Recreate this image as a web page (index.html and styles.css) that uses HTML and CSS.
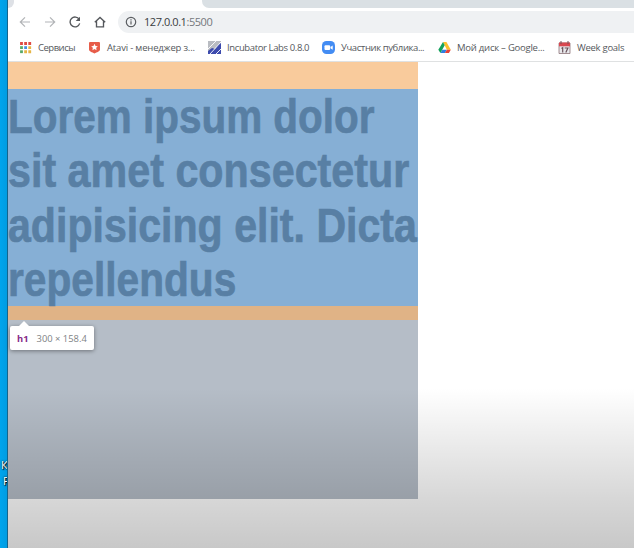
FILE: index.html
```
<!DOCTYPE html>
<html lang="ru">
<head>
<meta charset="utf-8">
<title>127.0.0.1:5500</title>
<link rel="stylesheet" href="styles.css">
</head>
<body>
<div class="desktop">
  <aside class="wallpaper"><div class="shortcut"><span>К</span><span>Р</span></div></aside>
  <main class="browser">
    <div class="tabs"><div class="tab-left"></div><div class="tab-active"></div><div class="tab-rest"></div></div>
    <nav class="toolbar">
      <svg class="nav muted" viewBox="0 0 12 12"><path d="M11 6H1.5M6 1.3 1.3 6 6 10.7"/></svg>
      <svg class="nav muted" viewBox="0 0 12 12"><path d="M1 6h9.5M6 1.3 10.7 6 6 10.7"/></svg>
      <svg class="nav" viewBox="0 0 12 12"><path d="M10.2 3.4A4.9 4.9 0 1 0 10.7 7.4"/><path class="solid" d="M11 .7V5H6.7z"/></svg>
      <svg class="nav" viewBox="0 0 12 12"><path d="M.8 6.3 6 1.4l5.2 4.9M2.5 5.2v5.6h7V5.2"/></svg>
      <div class="address">
        <svg class="info" viewBox="0 0 12 12"><circle cx="6" cy="6" r="4.7"/><path d="M6 5.3v3.2M6 3.2v1.2"/></svg>
        <span class="url">127.0.0.1<i>:5500</i></span>
      </div>
    </nav>
    <nav class="bookmarks">
      <a class="mark services"><svg viewBox="0 0 12 12"><path fill="#df4b44" d="M1 1h2.6v2.6H1zM4.8 1h2.6v2.6H4.8zM8.6 1h2.6v2.6H8.6z"/><path fill="#58a968" d="M1 4.8h2.6v2.6H1z"/><path fill="#458ee4" d="M4.8 4.8h2.6v2.6H4.8z"/><path fill="#e6b545" d="M8.6 4.8h2.6v2.6H8.6zM4.8 8.6h2.6v2.6H4.8zM8.6 8.6h2.6v2.6H8.6z"/><path fill="#58a968" d="M1 8.6h2.6v2.6H1z"/></svg><span>Сервисы</span></a>
      <a class="mark atavi"><svg viewBox="0 0 12 14"><path fill="#e75c49" d="M.8 1h10.4l.7 1v7.5c0 1.6-3.4 2.7-5.9 4-2.5-1.3-5.9-2.4-5.9-4V2z"/><path fill="#fff" d="m6 3 1.1 2.3 2.5.3-1.8 1.8.4 2.5L6 8.7 3.8 9.9l.4-2.5-1.8-1.8 2.5-.3z"/></svg><span>Atavi - менеджер з...</span></a>
      <a class="mark labs"><svg viewBox="0 0 13 13"><path fill="#b9bcc2" d="M0 0h13v13H0z"/><path fill="#3d4bad" d="M13 2v11H0v-3l4-3 3 1 3-4z"/><path fill="none" stroke="#fff" stroke-width=".9" d="M0 8 8 0M2 13 13 1M8 13l5-5"/></svg><span>Incubator Labs 0.8.0</span></a>
      <a class="mark zoom"><svg viewBox="0 0 13 13"><rect width="13" height="13" rx="4.5" fill="#438cf3"/><rect x="2.5" y="4.2" width="5.6" height="4.8" rx="1" fill="#fff"/><path fill="#fff" d="m8.5 6 2.2-1.5v4.2L8.5 7.3z"/></svg><span>Участник публика...</span></a>
      <a class="mark drive"><svg viewBox="0 0 12 12"><path fill="#fbc02d" d="M4.6 1h3.2l4 7H8.2z"/><path fill="#2f7de1" d="M4 8h4.2l-1.8 3H2.2z"/><path fill="#e84235" d="M8.2 8h3.6l-1.7 3H6.4z"/><path fill="#12a15b" d="M4.6 1 6.2 4 2.2 11 .3 8z"/></svg><span>Мой диск – Google...</span></a>
      <a class="mark week"><svg viewBox="0 0 12 13"><path fill="#e8e8eb" stroke="#8d7379" stroke-width=".8" d="M.5 2h11v10.5H.5z"/><path fill="#d94850" d="M.5 1.5h11v3.8H.5z"/><path stroke="#765057" d="M2.5 0v3M9.5 0v3"/><path fill="none" stroke="#69525b" stroke-width="1.2" d="m3 7.5 1.2-.9v5M6.2 7h3.2L7.3 11.6"/></svg><span>Week goals</span></a>
    </nav>
    <section class="page">
      <article class="box">
        <div class="margin-top"></div>
        <h1><span class="l1">Lorem ipsum dolor</span><span class="l2">sit amet consectetur</span><span class="l3">adipisicing elit. Dicta</span><span class="l4">repellendus</span></h1>
        <div class="margin-bottom"></div>
        <div class="tooltip"><b>h1</b><span>300 × 158.4</span></div>
      </article>
      <div class="shade"></div>
    </section>
  </main>
</div>
</body>
</html>
```
FILE: styles.css
```
* { box-sizing: border-box; }
body { margin: 0; overflow: hidden; background: #fff; font-family: "Open Sans", "Noto Sans", sans-serif; }
.desktop { display: flex; width: 634px; height: 548px; }
.wallpaper { width: 8px; flex: none; background: linear-gradient(90deg, #00a5ed, #009ce2); border-right: 1px solid #16658c; overflow: hidden; }
.shortcut { margin-top: 457px; color: #fff; font-size: 11px; line-height: 16px; text-shadow: 1px 1px 1px #000, 0 0 2px #000; }
.shortcut span { display: block; padding-left: 1px; }
.shortcut span + span { padding-left: 3px; }
.browser { display: flex; flex-direction: column; flex: 1; min-width: 0; }
.tabs { display: flex; height: 8px; flex: none; }
.tab-left { width: 6px; background: #dee1e6; border-bottom-right-radius: 6px; }
.tab-active { width: 188px; }
.tab-rest { flex: 1; background: #dae0e4; border-bottom-left-radius: 7px; }
.toolbar { display: flex; align-items: center; height: 28px; flex: none; padding-left: 11px; gap: 13px; }
.nav { width: 12px; height: 12px; fill: none; stroke: #55585c; stroke-width: 1.35; flex: none; }
.nav.muted { stroke: #b2b4b7; stroke-width: 1.2; }
.nav .solid { fill: #55585c; stroke: none; }
.address { display: flex; align-items: center; flex: 1; height: 22px; border-radius: 11px 0 0 11px; background: #eff1f3; padding-left: 7px; gap: 7px; margin-left: -1px; }
.info { width: 12px; height: 12px; fill: none; stroke: #5b5e62; stroke-width: 1.2; }
.url { font-size: 11px; line-height: 20px; color: #393c40; letter-spacing: -.44px; }
.url i { font-style: normal; color: #75787c; }
.bookmarks { display: flex; height: 26px; flex: none; border-bottom: 1px solid #dfe1e2; padding-left: 11px; color: #55585c; font-size: 9.5px; line-height: 14px; }
.mark { display: flex; align-items: center; height: 23px; white-space: nowrap; flex: none; }
.mark svg { width: 13px; height: 13px; margin-right: 6px; flex: none; }
.services { width: 69px; letter-spacing: -.5px; }
.atavi { width: 120px; letter-spacing: -.18px; }
.labs { width: 114px; letter-spacing: -.38px; }
.zoom { width: 116px; letter-spacing: -.4px; }
.drive { width: 120px; letter-spacing: -.23px; }
.week { width: 76px; letter-spacing: -.28px; }
.page { position: relative; flex: 1; }
.box { position: relative; width: 410px; height: 437px; background: #b5bdc7; }
.margin-top { height: 27px; background: #f9cb9c; }
h1 { margin: 0; height: 217px; padding-top: 1px; background: #86afd5; color: #587fa4; font: bold 49px/54.4px "Liberation Sans", Arial, sans-serif; white-space: nowrap; -webkit-text-stroke: .7px #587fa4; }
h1 span { display: block; width: max-content; transform-origin: left; }
.l1 { transform: translateY(-1px) scaleX(.826); }
.l2 { transform: translateY(-1px) scaleX(.842); }
.l3 { transform: translateY(-1px) scaleX(.839); }
.l4 { transform: translateY(-1px) scaleX(.83); }
.margin-bottom { height: 14px; background: #e0b386; }
.tooltip { position: absolute; left: 2px; top: 264px; width: 84px; height: 24px; padding-left: 7px; display: flex; align-items: center; gap: 8px; border-radius: 2px; background: #fff; box-shadow: 0 1px 4px #0006; color: #808285; font-size: 9.4px; white-space: nowrap; }
.tooltip b { color: #882b88; }
.tooltip::before { content: ""; position: absolute; left: 9px; top: -5px; border: 5px solid transparent; border-top: 0; border-bottom-color: #fff; }
.shade { position: absolute; inset: 326px 0 0; background: linear-gradient(#0000, #00000028 69%, #00000037); }
```
